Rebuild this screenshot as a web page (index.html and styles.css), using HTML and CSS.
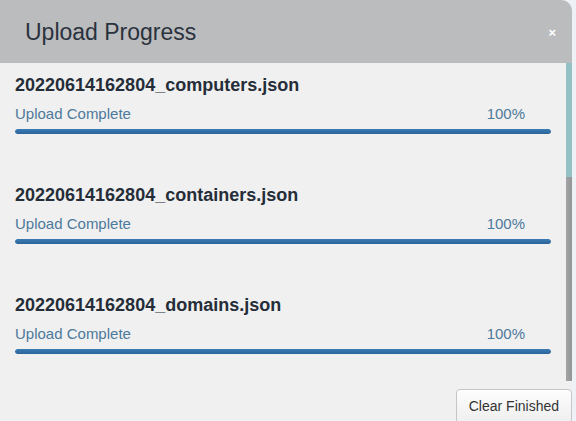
FILE: index.html
```html
<!DOCTYPE html>
<html>
<head>
<meta charset="utf-8">
<link rel="stylesheet" href="styles.css">
</head>
<body>
<div class="modal">
  <div class="modal-header">
    <h4 class="modal-title">Upload Progress</h4>
    <button class="close" type="button">×</button>
  </div>
  <div class="modal-body">
    <div class="list">
      <div class="item">
        <div class="filename">20220614162804_computers.json</div>
        <div class="status-row"><span class="status">Upload Complete</span><span class="pct">100%</span></div>
        <div class="bar"><div class="fill" style="width:100%"></div></div>
      </div>
      <div class="item">
        <div class="filename">20220614162804_containers.json</div>
        <div class="status-row"><span class="status">Upload Complete</span><span class="pct">100%</span></div>
        <div class="bar"><div class="fill" style="width:100%"></div></div>
      </div>
      <div class="item">
        <div class="filename">20220614162804_domains.json</div>
        <div class="status-row"><span class="status">Upload Complete</span><span class="pct">100%</span></div>
        <div class="bar"><div class="fill" style="width:100%"></div></div>
      </div>
    </div>
    <div class="scrollbar"><div class="thumb"></div></div>
  </div>
  <div class="modal-footer">
    <button class="btn" type="button">Clear Finished</button>
  </div>
</div>
</body>
</html>
```
FILE: styles.css
```css
html, body {
  margin: 0;
  padding: 0;
  height: 100%;
  overflow: hidden;
}
body {
  background: #eef2f7;
  font-family: "Liberation Sans", Arial, sans-serif;
}
.modal {
  width: 572px;
  height: 440px;
  background: #f0f0f0;
  border-radius: 0 11px 0 10px;
  overflow: hidden;
  display: flex;
  flex-direction: column;
}
.modal-header {
  height: 63px;
  flex: none;
  background: #bbbcbe;
  display: flex;
  align-items: center;
  justify-content: space-between;
  padding: 0 16px 0 25px;
  box-sizing: border-box;
}
.modal-title {
  margin: 0;
  font-size: 23px;
  font-weight: normal;
  color: #2a323d;
  line-height: 28px;
  padding-top: 1px;
}
.close {
  border: 0;
  background: none;
  padding: 0;
  color: #ffffff;
  font-family: "Liberation Sans", Arial, sans-serif;
  font-weight: bold;
  font-size: 13px;
  line-height: 14px;
  margin-top: 3px;
}
.modal-body {
  height: 318px;
  flex: none;
  display: flex;
}
.list {
  flex: 1;
  min-width: 0;
  padding: 12px 15px 0;
}
.scrollbar {
  width: 6px;
  flex: none;
  background: linear-gradient(90deg, #a3a4a6, #939496);
}
.thumb {
  height: 114px;
  background: #93c1c5;
}
.item {
  margin-bottom: 51px;
}
.filename {
  font-size: 18px;
  font-weight: bold;
  color: #252d38;
  line-height: 21px;
}
.status-row {
  display: flex;
  justify-content: space-between;
  margin-top: 9px;
  padding-right: 26px;
  font-size: 15px;
  line-height: 17px;
  color: #4d799b;
}
.bar {
  margin-top: 7px;
  height: 5px;
  border-radius: 3px;
  background: #dcdcdc;
  overflow: hidden;
}
.fill {
  height: 100%;
  background: linear-gradient(#3a7bb4, #2b649a);
  border-radius: 3px;
}
.modal-footer {
  display: flex;
  justify-content: flex-end;
  padding-top: 8px;
}
.btn {
  font-family: "Liberation Sans", Arial, sans-serif;
  font-size: 14px;
  line-height: 16px;
  color: #333333;
  padding: 8px 12px 14px;
  white-space: nowrap;
  background: linear-gradient(#fdfdfd, #ececec);
  border: 1px solid #c6c6c6;
  border-radius: 4px;
}
```
